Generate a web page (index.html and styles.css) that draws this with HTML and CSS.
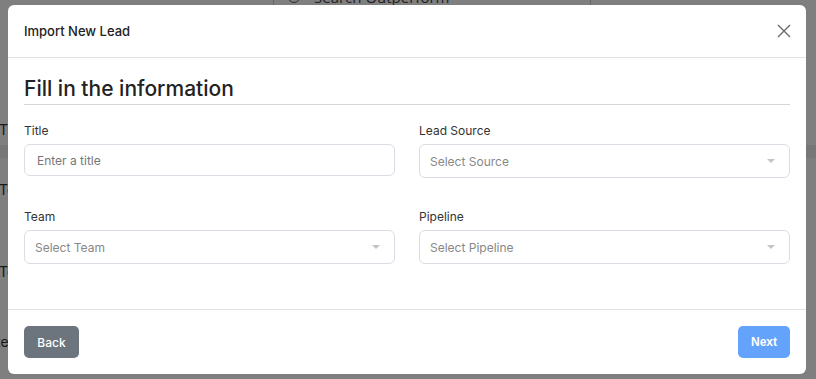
FILE: index.html
```html
<!DOCTYPE html>
<html>
<head>
  <title>Import New Lead</title>
  <link rel="stylesheet" href="styles.css">
</head>
<body>
  <!-- Página de fondo (queda detrás del modal) -->
  <div class="page">
    <div class="topbar">
      <div class="search">
        <span class="search-icon"></span>
        <span>Search Outperform</span>
      </div>
    </div>
    <div class="list">
      <div class="row row-1">Title</div>
      <div class="row-shade"></div>
      <div class="row row-2">Team</div>
      <div class="row row-3">Team</div>
      <div class="row row-4">Date</div>
    </div>
  </div>

  <!-- Modal -->
  <div class="overlay">
    <div class="modal">
      <div class="modal-header">
        <h5>Import New Lead</h5>
        <button class="close" aria-label="Close">
          <svg width="14" height="14" viewBox="0 0 14 14">
            <path d="M1 1L13 13M13 1L1 13" stroke="#6b6b6b" stroke-width="1.4" fill="none"/>
          </svg>
        </button>
      </div>

      <div class="modal-body">
        <h3 class="section-title">Fill in the information</h3>

        <div class="form-grid">
          <div class="field">
            <label for="title">Title</label>
            <input type="text" id="title" placeholder="Enter a title">
          </div>
          <div class="field">
            <label>Lead Source</label>
            <div class="select">Select Source<span class="caret"></span></div>
          </div>
          <div class="field">
            <label>Team</label>
            <div class="select">Select Team<span class="caret"></span></div>
          </div>
          <div class="field">
            <label>Pipeline</label>
            <div class="select">Select Pipeline<span class="caret"></span></div>
          </div>
        </div>
      </div>

      <div class="modal-footer">
        <button class="btn btn-back">Back</button>
        <button class="btn btn-next">Next</button>
      </div>
    </div>
  </div>
</body>
</html>
```

FILE: styles.css
```css
/* Cuerpo */
body {
  font-family: Inter, "Open Sans", sans-serif;
  margin: 0;
  padding: 0;
  background-color: #fff;
  color: #222;
  overflow: hidden;
}

/* Página de fondo */
.page {
  height: 379px;
  overflow: hidden;
}

.topbar {
  height: 6px;
  display: flex;
  justify-content: center;
  padding-left: 48px;
}

.search {
  width: 318px;
  height: 30px;
  margin-top: -18px;
  border-left: 1px solid #ccc;
  border-right: 1px solid #ccc;
  display: flex;
  align-items: center;
  gap: 14px;
  padding-left: 14px;
  box-sizing: border-box;
  font-family: "Open Sans", sans-serif;
  font-size: 15px;
  color: #444;
}

.search-icon {
  width: 10px;
  height: 10px;
  border: 1px solid #555;
  border-radius: 50%;
}

.row {
  height: 14px;
  line-height: 14px;
  font-size: 14px;
  color: #333;
}

.row-1 { margin-top: 117px; margin-left: -1px; }
.row-2 { margin-top: 25px; margin-left: -1px; }
.row-3 { margin-top: 68px; margin-left: -1px; }
.row-4 { margin-top: 56px; margin-left: -22px; }

.row-shade {
  height: 13px;
  margin-top: 8px;
  background-color: #eee;
}

/* Fondo oscuro */
.overlay {
  position: fixed;
  top: 0;
  left: 0;
  right: 0;
  bottom: 0;
  background-color: rgba(0, 0, 0, 0.5);
}

/* Modal */
.modal {
  width: 798px;
  margin: 5px 0 0 8px;
  background-color: #fff;
  border-radius: 6px;
}

.modal-header {
  display: flex;
  align-items: center;
  justify-content: space-between;
  padding: 16px 15px 16px 16px;
  border-bottom: 1px solid #e2e2e2;
}

.modal-header h5 {
  margin: 0;
  font-size: 13px;
  line-height: 20px;
  font-weight: 500;
  color: #222;
}

.close {
  border: none;
  background: none;
  padding: 0;
  width: 14px;
  height: 14px;
  cursor: pointer;
  display: flex;
}

.modal-body {
  padding: 16px 16px 45px;
}

.section-title {
  margin: 0;
  font-size: 21px;
  line-height: 30px;
  font-weight: 500;
  color: #222;
  border-bottom: 1px solid #d6d6d6;
}

/* Formulario */
.form-grid {
  display: grid;
  grid-template-columns: 1fr 1fr;
  column-gap: 24px;
  row-gap: 29px;
  margin-top: 16px;
}

.field label {
  display: block;
  font-size: 12px;
  line-height: 20px;
  color: #333;
  margin-bottom: 3px;
}

input[type="text"] {
  width: 100%;
  height: 32px;
  box-sizing: border-box;
  padding: 0 12px;
  border: 1px solid #dcdce4;
  border-radius: 6px;
  font-family: inherit;
  font-size: 12px;
  color: #333;
}

input::placeholder {
  color: #777;
}

.select {
  height: 34px;
  box-sizing: border-box;
  padding: 0 14px 0 10px;
  border: 1px solid #dcdce4;
  border-radius: 6px;
  display: flex;
  align-items: center;
  justify-content: space-between;
  font-size: 12px;
  color: #888;
}

.caret {
  width: 0;
  height: 0;
  border-left: 4px solid transparent;
  border-right: 4px solid transparent;
  border-top: 4px solid #c4c4c4;
}

/* Pie del modal */
.modal-footer {
  display: flex;
  justify-content: space-between;
  align-items: center;
  height: 64px;
  padding: 0 16px;
  border-top: 1px solid #e2e2e2;
}

.btn {
  height: 32px;
  border: none;
  border-radius: 5px;
  color: #fff;
  font-size: 12px;
  font-weight: 500;
  cursor: pointer;
}

.btn-back {
  width: 55px;
  font-family: inherit;
  background-color: #6c757d;
}

.btn-next {
  width: 52px;
  font-family: Arial, "Liberation Sans", sans-serif;
  font-weight: 600;
  background-color: #64a3fc;
}
```
